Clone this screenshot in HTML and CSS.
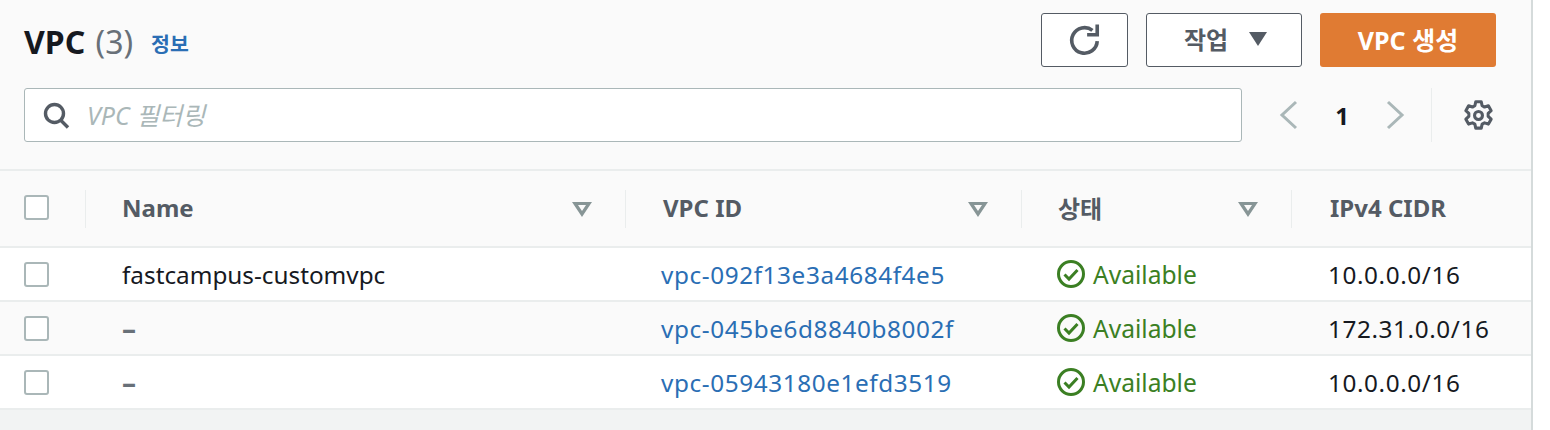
FILE: index.html
```html
<!DOCTYPE html>
<html lang="ko">
<head>
    <meta charset="UTF-8">
    <meta name="viewport" content="width=device-width, initial-scale=1.0">
    <title>VPC</title>
    <link rel="stylesheet" href="styles.css">
</head>
<body>

    <div class="panel">

        <!-- TOP BAR -->
        <div class="top-bar">
            <div class="title-box">
                <h1>VPC <span class="count">(3)</span></h1>
                <a class="info" href="#">정보</a>
            </div>
            <div class="actions">
                <button class="btn btn-refresh" aria-label="refresh">
                    <svg width="34" height="34" viewBox="0 0 32 32" fill="none" stroke="#545b64" stroke-width="3.4">
                        <path d="M27.500 17A12 12 0 1 1 23 7"/>
                        <path d="M27.500 1.500V11H18" stroke-linejoin="miter"/>
                    </svg>
                </button>
                <button class="btn btn-action">작업 <span class="caret"></span></button>
                <button class="btn btn-primary">VPC 생성</button>
            </div>
        </div>

        <!-- FILTER -->
        <div class="filter-bar">
            <div class="search">
                <svg width="28" height="28" viewBox="0 0 28 28" fill="none" stroke="#545b64" stroke-width="3.4">
                    <circle cx="12.500" cy="12.500" r="9"/>
                    <path d="M18.500 19L26 26.500"/>
                </svg>
                <span class="placeholder">VPC 필터링</span>
            </div>
            <div class="pager">
                <svg width="20" height="30" viewBox="0 0 20 30" fill="none" stroke="#aab7b8" stroke-width="3">
                    <path d="M17 2L3 15L17 28"/>
                </svg>
                <span class="page-num">1</span>
                <svg width="20" height="30" viewBox="0 0 20 30" fill="none" stroke="#aab7b8" stroke-width="3">
                    <path d="M3 2L17 15L3 28"/>
                </svg>
            </div>
            <div class="settings">
                <svg width="33" height="33" viewBox="0 0 30 30" fill="none" stroke="#545b64" stroke-width="2.800" stroke-linejoin="round">
                    <circle cx="15" cy="15" r="3.600"/>
                    <path d="M12.500 2.500h5l.8 3.600 2.200 1.200 3.500-1.100 2.500 4.400-2.700 2.500v2.800l2.700 2.500-2.500 4.400-3.500-1.100-2.200 1.200-.8 3.600h-5l-.8-3.600-2.200-1.200-3.500 1.100-2.500-4.400 2.700-2.500v-2.800L3.500 10.600l2.500-4.400 3.500 1.100 2.200-1.200z"/>
                </svg>
            </div>
        </div>

        <!-- TABLE -->
        <div class="row head-row">
            <div class="cell check-cell"><span class="checkbox"></span></div>
            <div class="cell head-cell name-head">
                <span>Name</span>
                <svg class="sort" width="20" height="16" viewBox="0 0 20 16" fill="none" stroke="#879596" stroke-width="3.200"><path d="M3 2.500H17L10 13z"/></svg>
            </div>
            <div class="cell head-cell">
                <span>VPC ID</span>
                <svg class="sort" width="20" height="16" viewBox="0 0 20 16" fill="none" stroke="#879596" stroke-width="3.200"><path d="M3 2.500H17L10 13z"/></svg>
            </div>
            <div class="cell head-cell status-head">
                <span>상태</span>
                <svg class="sort" width="20" height="16" viewBox="0 0 20 16" fill="none" stroke="#879596" stroke-width="3.200"><path d="M3 2.500H17L10 13z"/></svg>
            </div>
            <div class="cell head-cell last-head">
                <span>IPv4 CIDR</span>
            </div>
        </div>

        <div class="row body-row">
            <div class="cell check-cell"><span class="checkbox"></span></div>
            <div class="cell name-cell">fastcampus-customvpc</div>
            <div class="cell id-cell"><a href="#">vpc-092f13e3a4684f4e5</a></div>
            <div class="cell status-cell">
                <svg class="ok-icon" width="30" height="30" viewBox="0 0 30 30" fill="none" stroke="#3b7f23" stroke-width="3"><circle cx="15" cy="15" r="12.500"/><path d="M8.500 15.500L13 20L21.500 11"/></svg>
                <span>Available</span>
            </div>
            <div class="cell cidr-cell">10.0.0.0/16</div>
        </div>

        <div class="row body-row alt">
            <div class="cell check-cell"><span class="checkbox"></span></div>
            <div class="cell name-cell empty">–</div>
            <div class="cell id-cell"><a href="#">vpc-045be6d8840b8002f</a></div>
            <div class="cell status-cell">
                <svg class="ok-icon" width="30" height="30" viewBox="0 0 30 30" fill="none" stroke="#3b7f23" stroke-width="3"><circle cx="15" cy="15" r="12.500"/><path d="M8.500 15.500L13 20L21.500 11"/></svg>
                <span>Available</span>
            </div>
            <div class="cell cidr-cell">172.31.0.0/16</div>
        </div>

        <div class="row body-row">
            <div class="cell check-cell"><span class="checkbox"></span></div>
            <div class="cell name-cell empty">–</div>
            <div class="cell id-cell"><a href="#">vpc-05943180e1efd3519</a></div>
            <div class="cell status-cell">
                <svg class="ok-icon" width="30" height="30" viewBox="0 0 30 30" fill="none" stroke="#3b7f23" stroke-width="3"><circle cx="15" cy="15" r="12.500"/><path d="M8.500 15.500L13 20L21.500 11"/></svg>
                <span>Available</span>
            </div>
            <div class="cell cidr-cell">10.0.0.0/16</div>
        </div>

    </div>

</body>
</html>
```

FILE: styles.css
```css
* {
    margin: 0;
    padding: 0;
    box-sizing: border-box;
    font-family: "Noto Sans", "Noto Sans CJK KR", sans-serif;
}

body {
    width: 1550px;
    height: 430px;
    background: white;
    overflow: hidden;
}

.panel {
    width: 1533px;
    height: 430px;
    background: #f2f3f3;
    border-right: 2px solid #d5dbdb;
}

/* TOP BAR */
.top-bar {
    display: flex;
    justify-content: space-between;
    height: 89px;
    padding: 13px 35px 0 24px;
    background: #fafafa;
}

.title-box {
    display: flex;
    align-items: center;
    gap: 18px;
    height: 54px;
    padding-top: 3px;
}

h1 {
    font-size: 32px;
    font-weight: 700;
    color: #16191f;
}

.count {
    margin-left: 2px;
    font-weight: 400;
    color: #687078;
}

.info {
    padding-top: 2px;
    font-size: 20.5px;
    font-weight: 700;
    color: #2a6eb4;
    text-decoration: none;
}

.actions {
    display: flex;
    gap: 18px;
}

.btn {
    display: flex;
    align-items: center;
    justify-content: center;
    height: 54px;
    border: 1px solid #545b64;
    border-radius: 3px;
    background: white;
    color: #545b64;
    font-size: 24px;
    font-weight: 700;
}

.btn-refresh { width: 87px; }

.btn-action {
    width: 156px;
    gap: 21px;
    padding: 0 0 3px 3px;
}

.caret {
    width: 0;
    height: 0;
    border-left: 9px solid transparent;
    border-right: 9px solid transparent;
    border-top: 14px solid #545b64;
}

.btn-primary {
    width: 176px;
    padding-bottom: 3px;
    border: none;
    background: #e07b33;
    color: white;
    font-size: 25px;
}

/* FILTER */
.filter-bar {
    display: flex;
    align-items: center;
    height: 82px;
    padding: 0 35px 28px 24px;
    background: #fafafa;
    border-bottom: 2px solid #eaeded;
}

.search {
    display: flex;
    align-items: center;
    gap: 17px;
    width: 1218px;
    height: 54px;
    padding-left: 17px;
    background: white;
    border: 1px solid #aab7b8;
    border-radius: 3px;
}

.placeholder {
    padding-bottom: 2px;
    font-size: 25px;
    font-style: italic;
    color: #aab7b8;
}

.pager {
    display: flex;
    align-items: center;
    justify-content: space-between;
    width: 126px;
    margin-left: 37px;
}

.page-num {
    font-size: 24px;
    font-weight: 700;
    color: #16191f;
}

.settings {
    display: flex;
    align-items: center;
    justify-content: flex-end;
    width: 64px;
    height: 54px;
    margin-left: 26px;
    border-left: 1px solid #eaeded;
}

/* TABLE */
.row {
    display: grid;
    grid-template-columns: 85px 540px 396px 270px 1fr;
    align-items: center;
}

.head-row {
    height: 77px;
    background: #fafafa;
    border-bottom: 2px solid #eaeded;
}

.body-row {
    height: 54px;
    background: white;
    border-bottom: 2px solid #eaeded;
}

.body-row.alt { background: #fafafa; }

.check-cell { padding-left: 24px; }

.checkbox {
    display: block;
    width: 25px;
    height: 25px;
    background: white;
    border: 2px solid #aab7b8;
    border-radius: 3px;
}

.head-row .checkbox { margin-bottom: 2px; }

.head-cell {
    display: flex;
    align-items: center;
    justify-content: space-between;
    height: 38px;
    padding: 0 33px 0 37px;
    border-left: 1px solid #eaeded;
    font-size: 24px;
    font-weight: 700;
    color: #545b64;
}

.head-cell span { margin-bottom: 2px; }

.name-head, .status-head { padding-left: 36px; }

.last-head { padding-left: 38px; }

.name-cell, .cidr-cell {
    font-size: 24.3px;
    color: #16191f;
}

.name-cell { padding-left: 37px; }

.name-cell.empty {
    font-size: 28px;
    font-weight: 700;
    color: #687078;
}

.id-cell { padding-left: 36px; }

.id-cell a {
    font-size: 24.3px;
    letter-spacing: 0.6px;
    color: #2a6eb4;
    text-decoration: none;
}

.status-cell {
    display: flex;
    align-items: center;
    gap: 7px;
    padding-left: 35px;
    font-size: 24.6px;
    color: #3b7f23;
}

.cidr-cell {
    padding-left: 37px;
    letter-spacing: 0.6px;
}
```
